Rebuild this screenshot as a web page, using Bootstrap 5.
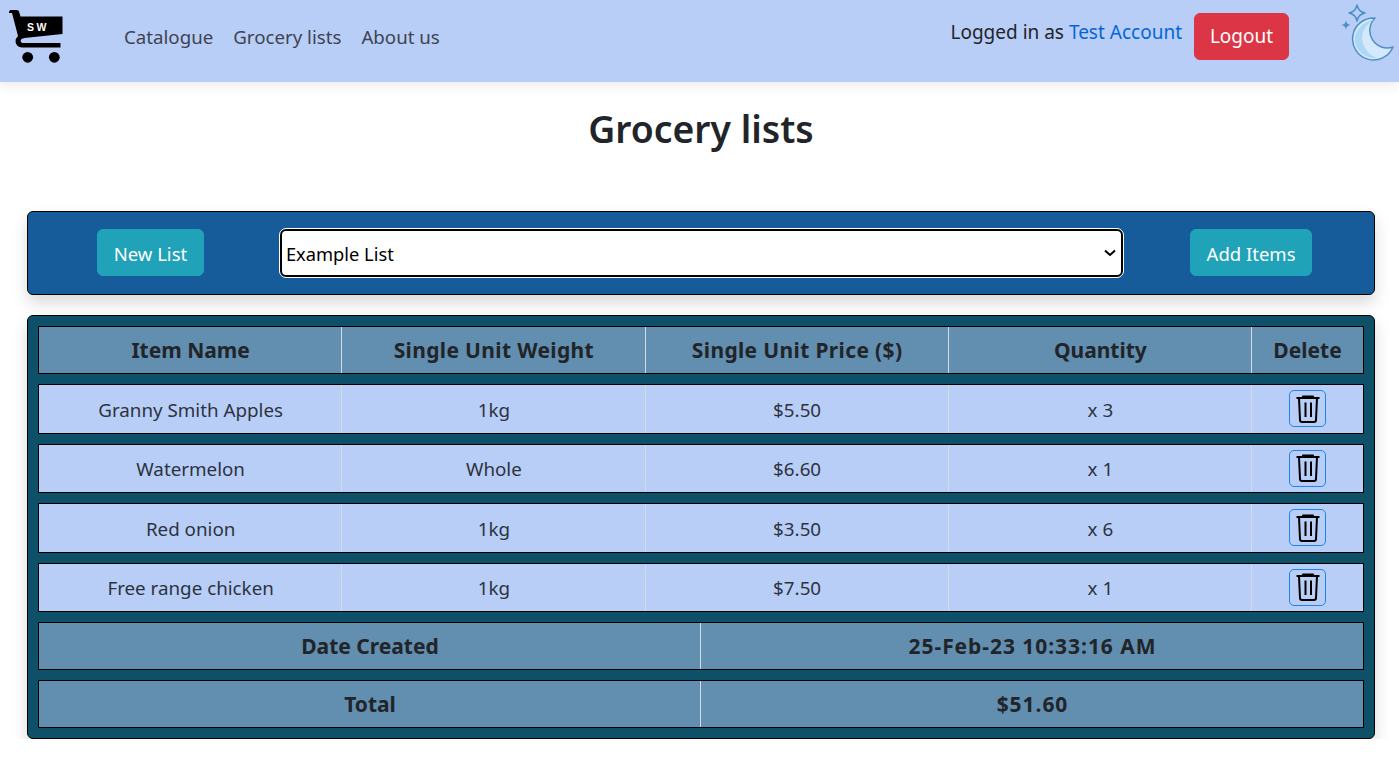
<!DOCTYPE html>
<html lang="en">
<head>
  <meta charset="UTF-8">
  <title>Grocery lists</title>
  <meta name="viewport" content="width=device-width, initial-scale=1">
  <link href="https://cdn.jsdelivr.net/npm/bootstrap@5.3.3/dist/css/bootstrap.min.css" rel="stylesheet">
  <style>
    body {
      font-family: "Noto Sans", "Open Sans", sans-serif;
      font-size: 20px;
      color: #212529;
      overflow: hidden;
    }
    .top-bar {
      background: #b9cef7;
      height: 82px;
      padding: 0;
      box-shadow: 0 4px 12px rgba(0,0,0,0.08);
    }
    .cart-logo { width: 54px; height: 56px; margin: 8px 0 0 9px; }
    .top-links { margin-left: 61px; margin-top: -8px; gap: 20px; }
    .top-links a { color: #3d4450; text-decoration: none; font-size: 18.7px; }
    .user-text { color: #212529; font-size: 19px; margin-top: -18px; }
    .user-text a { color: #0366d6; text-decoration: none; }
    .logout-btn { font-size: 19px; width: 95px; height: 47px; margin: 0 50px 9px 12px; padding: 0; }
    .moon-icon { width: 56px; height: 60px; margin: 0 4px 20px 0; }
    .page-title { font-size: 37.3px; font-weight: 600; text-align: center; margin: 24px 0 59px; padding-left: 3px; line-height: 46px; }
    .list-bar {
      margin: 0 24px 20px 27px;
      height: 84px;
      background: #165c9a;
      border: 1px solid #000;
      border-radius: 6px;
      box-shadow: 0 8px 16px rgba(0,0,0,0.15);
    }
    .bar-btn { font-size: 18.5px; color: #fff; height: 47px; margin-top: -1px; padding: 3px 0 0; white-space: nowrap; background: #20a2b8; border-color: #20a2b8; }
    .bar-btn:hover { color: #fff; background: #20a2b8; }
    .new-btn { margin-left: 69px; width: 107px; }
    .add-btn { margin-right: 62px; width: 122px; }
    .list-select {
      width: 844px;
      height: 48px;
      margin-left: 76px;
      margin-right: 67px;
      font-size: 18.3px;
      line-height: 1.5;
      color: #000;
      background-color: #fff;
      background-image: url("data:image/svg+xml,%3csvg xmlns='http://www.w3.org/2000/svg' viewBox='0 0 12 8'%3e%3cpath fill='none' stroke='%23000' stroke-width='2' d='M1 1.500l5 4.500 5-4.500'/%3e%3c/svg%3e");
      background-position: right 5px center;
      background-size: 12px 8px;
      border: 2px solid #000;
      border-radius: 6px;
      outline: 1px solid #fff;
      padding: 2px 24px 0 4px;
    }
    .items-panel {
      margin: 0 24px 0 27px;
      height: 424px;
      background: #0f5069;
      border: 1px solid #000;
      border-radius: 6px;
      padding: 10px 10px 0 10px;
      box-shadow: 0 8px 16px rgba(0,0,0,0.15);
      gap: 10px;
    }
    .row-table {
      width: 100%;
      table-layout: fixed;
      border-collapse: separate;
      border-spacing: 0;
      border: 1px solid #000;
      text-align: center;
    }
    .row-table td, .row-table th { border-right: 1px solid #d5dbe6; padding: 2px 0 0 1px; vertical-align: middle; }
    .row-table td:last-child, .row-table th:last-child { border-right: 0; }
    .head-row { background: #628eb0; height: 48px; font-size: 21px; font-weight: 700; }
    .head-row th { font-weight: 700; }
    .item-row { background: #b9cef7; height: 49.5px; font-size: 18.8px; color: #2b3340; }
    .row-table .col-last { width: 111px; padding-left: 0; }
    .wide-text { letter-spacing: .35px; }
    .digit-text { letter-spacing: .95px; }
    .trash-btn {
      width: 37px;
      height: 37px;
      padding: 0;
      margin-top: 1px;
      border: 1px solid #1f83f0;
      border-radius: 5px;
      background: transparent;
      display: inline-flex;
      align-items: center;
      justify-content: center;
    }
    .trash-btn svg { width: 24px; height: 28px; }
  </style>
</head>
<body>
  <nav class="top-bar d-flex align-items-center">
    <svg class="cart-logo align-self-start" viewBox="0 0 54 56">
      <path d="M1 2h7q1.500 0 2 1.500l1.500 5h42v17.500l-38 4-3 1q-1.500 1.500-.5 3 .5 1 2 1h37.500v4.500h-38q-5 0-6.500-4-1.500-4 2-7.500l-6-23h-3.500z" fill="#000"/>
      <circle cx="18.700" cy="49.300" r="5.400" fill="#000"/>
      <circle cx="45.300" cy="49.300" r="5.400" fill="#000"/>
      <text x="18" y="23" fill="#fff" font-family="Liberation Sans, sans-serif" font-weight="700" font-size="10.500" letter-spacing="2.500">SW</text>
    </svg>
    <div class="top-links d-flex">
      <a href="#">Catalogue</a>
      <a href="#">Grocery lists</a>
      <a href="#">About us</a>
    </div>
    <div class="ms-auto d-flex align-items-center">
      <span class="user-text">Logged in as <a href="#">Test Account</a></span>
      <button class="btn btn-danger logout-btn">Logout</button>
      <svg class="moon-icon" viewBox="0 0 56 60">
        <path d="M36 17A21 21 0 1 0 54 46 17.500 17.500 0 0 1 36 17z" fill="#d4e9fb" stroke="#4c8fc4" stroke-width="1.500" stroke-linejoin="round"/>
        <path d="M35 18.500C22 21 15 31 16 41c1 9 11 17 22 16-8-3-14-10-15-19-.5-8 5-15 12-19.500z" fill="#aed6f5"/>
        <path d="M18 4c1 5 3 7 8 8-5 1-7 3-8 8-1-5-3-7-8-8 5-1 7-3 8-8z" fill="#b9cef7" stroke="#4c8fc4" stroke-width="1.500" stroke-linejoin="round"/>
        <path d="M7 19c.6 3.500 1.500 4.400 5 5-3.500.6-4.400 1.500-5 5-.6-3.500-1.500-4.400-5-5 3.500-.6 4.400-1.500 5-5z" fill="#4c8fc4"/>
      </svg>
    </div>
  </nav>

  <h1 class="page-title">Grocery lists</h1>

  <div class="list-bar d-flex align-items-center">
    <button class="btn bar-btn new-btn">New List</button>
    <select class="form-select list-select">
      <option>Example List</option>
    </select>
    <button class="btn bar-btn add-btn">Add Items</button>
  </div>

  <div class="items-panel d-flex flex-column">
    <table class="row-table head-row">
      <tr><th>Item Name</th><th class="wide-text">Single Unit Weight</th><th class="wide-text">Single Unit Price ($)</th><th>Quantity</th><th class="col-last">Delete</th></tr>
    </table>
    <table class="row-table item-row" id="r1"></table>
    <table class="row-table item-row" id="r2"></table>
    <table class="row-table item-row" id="r3"></table>
    <table class="row-table item-row" id="r4"></table>
    <table class="row-table head-row">
      <tr><td>Date Created</td><td class="digit-text">25-Feb-23 10:33:16 AM</td></tr>
    </table>
    <table class="row-table head-row">
      <tr><td>Total</td><td class="digit-text">$51.60</td></tr>
    </table>
  </div>

  <script src="https://cdn.jsdelivr.net/npm/bootstrap@5.3.3/dist/js/bootstrap.bundle.min.js"></script>
  <script>
    const items = [
      ['Granny Smith Apples', '1kg', '$5.50', 'x 3'],
      ['Watermelon', 'Whole', '$6.60', 'x 1'],
      ['Red onion', '1kg', '$3.50', 'x 6'],
      ['Free range chicken', '1kg', '$7.50', 'x 1']
    ];
    const trash = `<button class="trash-btn"><svg viewBox="0 0 24 28" fill="none" stroke="#000" stroke-width="2" stroke-linejoin="round">
      <path d="M.5 3h23M7 3V1.500h10V3M3 3l1 22q0 2 2 2h12q2 0 2-2l1-22M9.500 7.500V22M15 7.500V22"/></svg></button>`;
    items.forEach((it, i) => {
      const cells = it.map(v => `<td>${v}</td>`).join('');
      document.getElementById('r' + (i + 1)).innerHTML = `<tr>${cells}<td class="col-last">${trash}</td></tr>`;
    });
  </script>
</body>
</html>
